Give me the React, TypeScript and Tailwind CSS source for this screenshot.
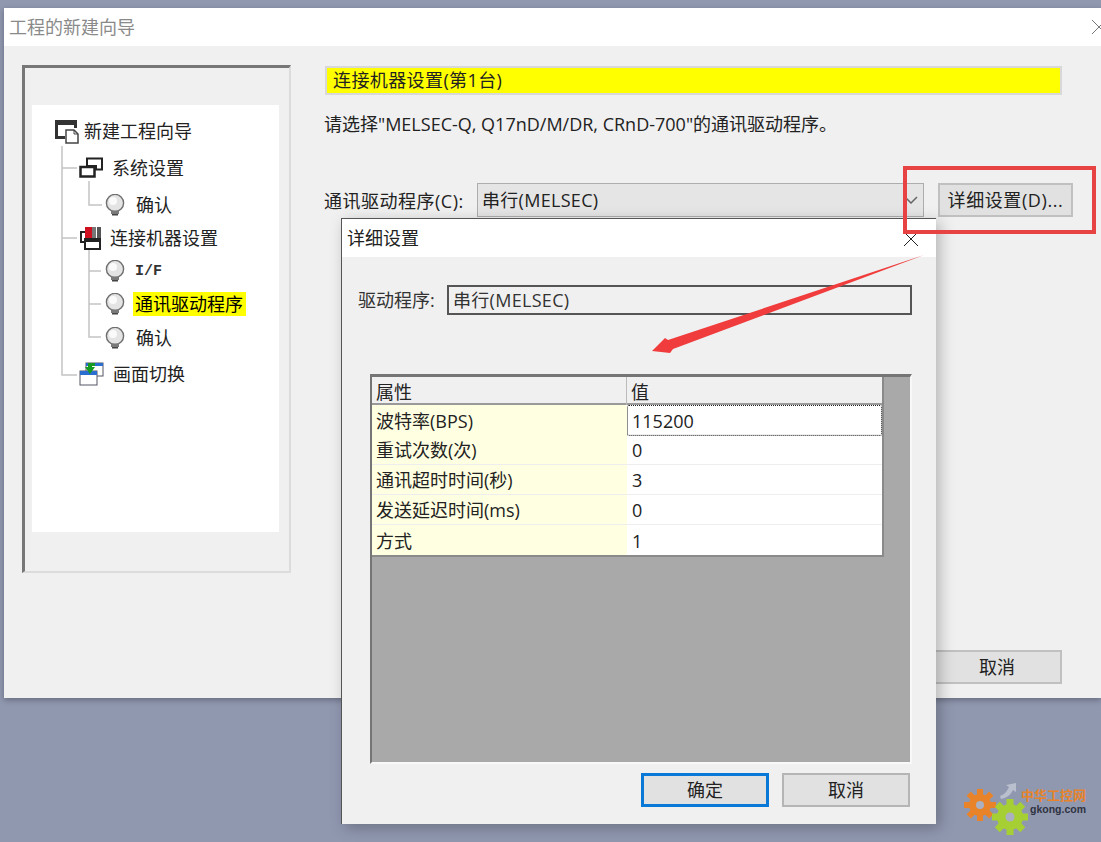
const font = "font-['Open_Sans','Noto_Sans_CJK_SC',sans-serif]";

function Bulb() {
  return (
    <svg width="20" height="22" viewBox="0 0 20 22" className="shrink-0">
      <circle cx="10" cy="9" r="8.6" fill="#e4e4e4" stroke="#6f6f6f" strokeWidth="1.4" />
      <circle cx="8" cy="7" r="4" fill="#fafafa" />
      <rect x="6" y="16.5" width="8" height="3.5" fill="#7a7a7a" />
      <rect x="7" y="20" width="6" height="1.5" fill="#444" />
    </svg>
  );
}

function RootIcon() {
  return (
    <svg width="25" height="25" viewBox="0 0 25 25" className="shrink-0">
      <path d="M1 1h22v8h-3V6H4v11h7v3H1z" fill="#333" />
      <path d="M12 11h8l4 4v9H12z" fill="#fff" stroke="#444" strokeWidth="1.5" />
      <path d="M20 11v4h4" fill="none" stroke="#444" />
    </svg>
  );
}

function SystemIcon() {
  return (
    <svg width="25" height="22" viewBox="0 0 25 22" className="shrink-0">
      <path d="M8 1.5h15v11H17V9H8z" fill="#fff" stroke="#222" strokeWidth="2" />
      <rect x="1.5" y="10" width="14" height="9.5" fill="#fff" stroke="#222" strokeWidth="2.5" />
    </svg>
  );
}

function DeviceIcon() {
  return (
    <svg width="24" height="24" viewBox="0 0 24 24" className="shrink-0">
      <rect x="6" y="1" width="7" height="12" fill="#d01020" />
      <rect x="13" y="1" width="4" height="12" fill="#777" />
      <rect x="18" y="1" width="4" height="12" fill="#555" />
      <path d="M6 6H2v10h4" fill="none" stroke="#222" strokeWidth="2" />
      <rect x="6" y="13" width="15" height="10" fill="#fff" stroke="#222" strokeWidth="2" />
      <rect x="6" y="13" width="15" height="3" fill="#222" />
    </svg>
  );
}

function SwitchIcon() {
  return (
    <svg width="25" height="24" viewBox="0 0 25 24" className="shrink-0">
      <rect x="7" y="1" width="17" height="13" fill="#fff" stroke="#556" />
      <rect x="7" y="1" width="17" height="3" fill="#2a6fd0" />
      <rect x="1" y="9" width="17" height="14" fill="#fff" stroke="#556" />
      <rect x="1" y="9" width="17" height="4" fill="#2a6fd0" />
      <path d="M16 1H9v4H6l5 7 5-7h-3V4h3z" fill="#159a22" />
    </svg>
  );
}

type Row = {
  icon: React.ReactNode;
  label: string;
  cls: string;
  active?: boolean;
  mono?: boolean;
};

// mt-* are the gaps between the 24px rows of the tree
const rows: Row[] = [
  { icon: <RootIcon />, label: "新建工程向导", cls: "pl-[22px] gap-[5px]" },
  { icon: <SystemIcon />, label: "系统设置", cls: "mt-[13px] pl-[47px] gap-[8px]" },
  { icon: <Bulb />, label: "确认", cls: "mt-[13px] pl-[73px] gap-[11px]" },
  { icon: <DeviceIcon />, label: "连接机器设置", cls: "mt-[9px] pl-[47px] gap-[7px]" },
  { icon: <Bulb />, label: "I/F", cls: "mt-[9px] pl-[73px] gap-[10px]", mono: true },
  { icon: <Bulb />, label: "通讯驱动程序", cls: "mt-[9px] pl-[73px] gap-[8px]", active: true },
  { icon: <Bulb />, label: "确认", cls: "mt-[10px] pl-[73px] gap-[11px]" },
  { icon: <SwitchIcon />, label: "画面切换", cls: "mt-[12px] pl-[47px] gap-[9px]" },
];

const props = [
  ["波特率(BPS)", "115200"],
  ["重试次数(次)", "0"],
  ["通讯超时时间(秒)", "3"],
  ["发送延迟时间(ms)", "0"],
  ["方式", "1"],
];

function Tree() {
  return (
    <div className="relative mt-[37px] ml-[7px] h-[427px] w-[247px] bg-white pt-[14px] text-[18px] leading-none text-[#222]">
      <svg width="247" height="427" className="absolute left-0 top-0" fill="none" stroke="#c4c4c4" strokeWidth="1.5">
        <path d="M30 41V270H45M30 63H45M30 133H45" />
        <path d="M57 76V100H70" />
        <path d="M57 145V232H69M57 166H69M57 199H69" />
      </svg>
      {rows.map((r, i) => (
        <div key={i} className={`relative flex h-[24px] items-center ${r.cls}`}>
          {r.icon}
          <span
            className={
              r.active
                ? "flex h-[24px] items-center bg-[#ffff00] pl-[2px] pr-[3px] text-black"
                : r.mono
                  ? "font-['Liberation_Mono',monospace] text-[15px] font-bold text-[#333]"
                  : ""
            }
          >
            {r.label}
          </span>
        </div>
      ))}
    </div>
  );
}

function DetailDialog() {
  return (
    <div className="absolute left-[341px] top-[218px] flex h-[606px] w-[595px] flex-col border-l border-t border-[#555] bg-[#f0f0f0] text-[18px] shadow-[4px_4px_14px_rgba(0,0,0,0.25)]">
      <div className="flex h-[38px] shrink-0 items-center justify-between bg-white pl-[5px] pr-[17px] text-[#222]">
        <span>详细设置</span>
        <svg width="16" height="16" viewBox="0 0 16 16" stroke="#222" strokeWidth="1" className="mt-[1px]">
          <path d="M1 1l14 14M15 1L1 15" />
        </svg>
      </div>
      <div className="mt-[28px] flex items-center pl-[16px] pr-[24px] text-[#333]">
        <span className="w-[89px] shrink-0">驱动程序:</span>
        <div className="flex h-[30px] flex-1 items-center border-2 border-[#555] pl-[4px] tracking-[0.3px] text-[#333]">串行(MELSEC)</div>
      </div>
      <div className="ml-[28px] mt-[59px] flex h-[390px] w-[542px] flex-col border-2 border-t-[3px] border-[#757575] border-r-[#f8f8f8] border-b-[#f8f8f8] bg-[#a9a9a9] text-[#222]">
        <div className="w-[512px] border-r-2 border-b-2 border-[#8a8a8a] bg-white">
          <div className="grid h-[28px] grid-cols-[255px_1fr] border-b-2 border-[#9a9a9a] bg-[#f0f0f0]">
            <div className="flex items-center border-r border-[#bbb] pl-[4px] pt-[2px]">属性</div>
            <div className="flex items-center pl-[4px] pt-[2px]">值</div>
          </div>
          {props.map(([k, v], i) => (
            <div key={k} className={`grid h-[30px] grid-cols-[255px_1fr] ${i < 4 ? "border-b border-[#eeeeee]" : ""}`}>
              <div className="flex items-center bg-[#ffffe1] pl-[4px] pt-[2px]">{k}</div>
              <div className={`flex items-center rounded-[2px] pl-[4px] pt-[2px] ${i === 0 ? "border border-dotted border-[#222]" : "pl-[5px]"}`}>{v}</div>
            </div>
          ))}
        </div>
      </div>
      <div className="mt-[9px] flex justify-end gap-[13px] pr-[26px] text-[#222]">
        <button className="h-[34px] w-[128px] border-[3px] border-[#0a78d7] bg-[#e1e1e1]">确定</button>
        <button className="h-[34px] w-[128px] border-2 border-[#b5b5b5] bg-[#e1e1e1]">取消</button>
      </div>
    </div>
  );
}

function Gkong() {
  const teeth = [0, 45, 90, 135, 180, 225, 270, 315];
  return (
    <div className="absolute left-[964px] top-[780px] h-[56px] w-[130px]">
      <svg width="70" height="56" viewBox="0 0 70 56" className="absolute left-0 top-0">
        <path d="M36 16q6-2 9-9l-3-2 10-2 0 9-3-2q-4 8-12 9z" fill="#b9bfcc" />
        <g fill="#e8832a">
          {teeth.map((a) => (
            <rect key={a} x="13" y="9" width="6" height="6" transform={`rotate(${a} 16 25)`} />
          ))}
          <circle cx="16" cy="25" r="11" />
        </g>
        <circle cx="16" cy="25" r="4" fill="#aab0c0" />
        <g fill="#a6cf34">
          {teeth.map((a) => (
            <rect key={a} x="42.5" y="19" width="7" height="7" transform={`rotate(${a} 46 37)`} />
          ))}
          <circle cx="46" cy="37" r="13" />
        </g>
        <circle cx="46" cy="37" r="4.5" fill="#aab0c0" />
      </svg>
      <div className="absolute left-[57px] top-[9px] whitespace-nowrap text-[13px] font-bold leading-none text-[#e8832a]">中华工控网</div>
      <div className="absolute left-[66px] top-[24px] whitespace-nowrap font-['Liberation_Sans',sans-serif] text-[10.5px] font-bold leading-none text-[#2f3340]">gkong.com</div>
    </div>
  );
}

export default function App() {
  return (
    <div className={`relative h-[842px] w-[1101px] overflow-hidden bg-[#9098b0] pl-[4px] pt-[8px] ${font}`}>
      <div className="h-[690px] w-[1097px] bg-[#f0f0f0] shadow-[0_2px_6px_rgba(0,0,0,0.3)]">
        <div className="flex h-[38px] items-center justify-between bg-white pl-[5px] text-[18px] text-[#8a8a8a]">
          <span>工程的新建向导</span>
          <svg width="10" height="18" viewBox="0 0 10 18" stroke="#777" strokeWidth="1">
            <path d="M1 2l14 14M1 16L15 2" />
          </svg>
        </div>
        <div className="flex pl-[18px] pt-[19px]">
          <div className="h-[508px] w-[269px] shrink-0 border-b-2 border-l-[3px] border-r-2 border-t-[3px] border-b-[#dcdcdc] border-l-[#777] border-r-[#dcdcdc] border-t-[#777]">
            <Tree />
          </div>
          <div className="ml-[34px] mt-[1px] flex h-[618px] w-[750px] shrink-0 flex-col text-[18px] text-[#222]">
            <div className="flex h-[29px] w-[737px] items-center border-2 border-[#d8d8d8] bg-[#ffff00] pl-[6px] tracking-[0.4px]">连接机器设置(第1台)</div>
            <div className="-ml-[1px] mt-[16px] leading-[26px]">请选择"MELSEC-Q, Q17nD/M/DR, CRnD-700"的通讯驱动程序。</div>
            <div className="mt-[46px] flex items-center">
              <span className="-ml-[1px] w-[153px] shrink-0 pt-[2px] tracking-[0.5px]">通讯驱动程序(C):</span>
              <div className="flex h-[34px] w-[447px] shrink-0 items-center justify-between border border-[#adadad] bg-[#e5e5e5] pl-[4px] pr-[5px]">
                <span className="tracking-[0.3px]">串行(MELSEC)</span>
                <svg width="14" height="8" viewBox="0 0 14 8" fill="none" stroke="#666" strokeWidth="1.5">
                  <path d="M1 1l6 6 6-6" />
                </svg>
              </div>
              <button className="ml-[14px] h-[34px] w-[135px] shrink-0 border-2 border-[#c0c0c0] bg-[#e1e1e1] tracking-[0.6px]">详细设置(D)...</button>
            </div>
            <div className="mt-auto flex w-[737px] justify-end">
              <button className="h-[34px] w-[130px] border-2 border-[#c0c0c0] bg-[#e1e1e1]">取消</button>
            </div>
          </div>
        </div>
      </div>
      <DetailDialog />
      {/* annotation drawn over the screenshot */}
      <div className="absolute left-[903px] top-[166px] h-[68px] w-[193px] border-[4px] border-[#e84343]" />
      <svg width="1101" height="842" className="pointer-events-none absolute left-0 top-0">
        <polygon points="924,255 673,349 670,353 652,351 665,338 668,340" fill="#f03c3c" />
      </svg>
      <Gkong />
    </div>
  );
}
